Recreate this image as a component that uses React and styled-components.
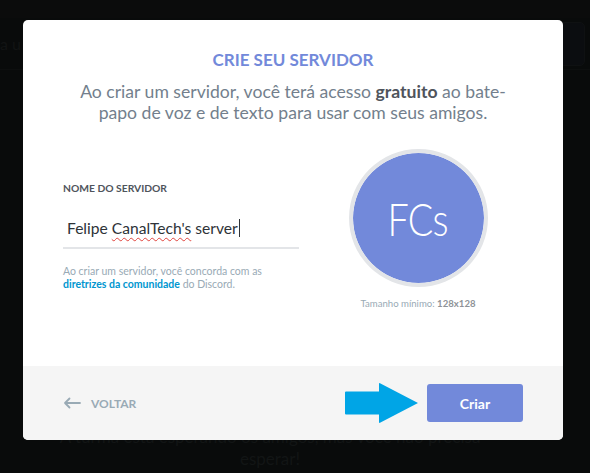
import React from "react";
import styled, { createGlobalStyle } from "styled-components";

const Global = createGlobalStyle`
  html, body { margin: 0; padding: 0; background: #0a0c0c; }
  body { font-family: Lato, "Noto Sans", sans-serif; }
  * { box-sizing: border-box; }
`;

const Page = styled.div`
  position: relative;
  width: 590px;
  height: 473px;
  overflow: hidden;
  background: #090b0b;
  display: flex;
  flex-direction: column;
`;

const TopBand = styled.div`
  height: 18px;
  background: #0b0c0c;
`;

const BgHeader = styled.div`
  height: 52px;
  display: flex;
  align-items: center;
  justify-content: space-between;
  padding: 0 5px 0 0;
  border-bottom: 1px solid #0d0f0f;
`;

const BgFaint = styled.span`
  color: #121414;
  font-size: 16px;
`;

const BgBox = styled.div`
  width: 26px;
  height: 44px;
  border: 1px solid #0f1112;
  border-radius: 5px;
  background: #0b0d10;
`;

const BgBody = styled.div`
  flex: 1;
  display: flex;
  flex-direction: column;
  justify-content: flex-end;
  padding-bottom: 3px;
`;

const BgText = styled.p`
  margin: 0;
  width: 540px;
  text-align: center;
  color: #121515;
  font-size: 17px;
  line-height: 22px;
`;

const Modal = styled.div`
  position: absolute;
  left: 23px;
  top: 20px;
  width: 540px;
  height: 420px;
  background: #ffffff;
  border-radius: 5px;
  overflow: hidden;
  display: flex;
  flex-direction: column;
`;

const Header = styled.div`
  padding: 30px 30px 0;
  text-align: center;
`;

const Title = styled.h2`
  margin: 0;
  color: #7289da;
  font-size: 17px;
  line-height: 20px;
  font-weight: 700;
`;

const Subtitle = styled.p`
  margin: 11px 0 0;
  color: #737f8d;
  font-size: 17.6px;
  line-height: 21px;
  font-weight: 400;
  b { color: #4f545c; font-weight: 700; }
`;

const Body = styled.div`
  display: flex;
  justify-content: space-between;
  align-items: flex-start;
  padding: 26px 75px 0 40px;
`;

const LeftCol = styled.div`
  width: 236px;
  padding-top: 32px;
`;

const Label = styled.div`
  color: #4f545c;
  font-size: 10.3px;
  line-height: 14px;
  font-weight: 700;
  text-transform: uppercase;
`;

const InputBox = styled.div`
  margin-top: 14px;
  height: 40px;
  border-bottom: 2px solid #e3e5e8;
  display: flex;
  align-items: center;
  padding-left: 4px;
  color: #2e3338;
  font-size: 15.6px;
`;

const Misspelled = styled.span`
  text-decoration: underline wavy #e0443e;
  text-decoration-thickness: 1px;
  text-underline-offset: 3px;
`;

const Caret = styled.span`
  display: inline-block;
  width: 1px;
  height: 18px;
  background: #2e3338;
  margin-left: 1px;
`;

const Help = styled.p`
  margin: 16px 0 0;
  color: #99aab5;
  font-size: 10.5px;
  line-height: 13px;
  a { color: #0096cf; font-weight: 700; text-decoration: none; }
`;

const RightCol = styled.div`
  width: 140px;
  display: flex;
  flex-direction: column;
  align-items: center;
`;

const Avatar = styled.div`
  width: 139px;
  height: 138px;
  border-radius: 50%;
  border: 4px solid #e3e5e8;
  background: #7289da;
  background-clip: padding-box;
  display: flex;
  align-items: center;
  justify-content: center;
  color: #ffffff;
  font-size: 46px;
  font-weight: 300;
  letter-spacing: -1px;
`;

const AvatarInner = styled.span`
  display: inline-block;
  transform: scaleX(0.82);
`;

const SizeHint = styled.div`
  margin-top: 10px;
  color: #99aab5;
  font-size: 9.6px;
  line-height: 13px;
  white-space: nowrap;
  b { color: #8e9297; font-weight: 700; }
`;

const Footer = styled.div`
  margin-top: auto;
  height: 74px;
  background: #f5f5f5;
  display: flex;
  align-items: center;
  justify-content: space-between;
  padding: 0 40px;
  position: relative;
`;

const BackButton = styled.button`
  border: 0;
  background: none;
  padding: 0;
  display: flex;
  align-items: center;
  gap: 10px;
  color: #99aab5;
  font-family: inherit;
  font-size: 12px;
  font-weight: 700;
  text-transform: uppercase;
`;

const CreateButton = styled.button`
  width: 96px;
  height: 38px;
  border: 0;
  border-radius: 3px;
  background: #7289da;
  color: #ffffff;
  font-family: inherit;
  font-size: 14px;
  font-weight: 700;
`;

const Pointer = styled.svg`
  position: absolute;
  left: 321px;
  top: 16px;
`;

export default function App() {
  return (
    <>
      <Global />
      <Page>
        <TopBand />
        <BgHeader>
          <BgFaint>a u</BgFaint>
          <BgBox />
        </BgHeader>
        <BgBody>
          <BgText>
            A turma está esperando os amigos, mas você não precisa
            <br />
            esperar!
          </BgText>
        </BgBody>
        <Modal>
          <Header>
            <Title>CRIE SEU SERVIDOR</Title>
            <Subtitle>
              Ao criar um servidor, você terá acesso <b>gratuito</b> ao bate-
              <br />
              papo de voz e de texto para usar com seus amigos.
            </Subtitle>
          </Header>
          <Body>
            <LeftCol>
              <Label>Nome do servidor</Label>
              <InputBox>
                Felipe&nbsp;<Misspelled>CanalTech's</Misspelled>&nbsp;server
                <Caret />
              </InputBox>
              <Help>
                Ao criar um servidor, você concorda com as
                <br />
                <a href="#">diretrizes da comunidade</a> do Discord.
              </Help>
            </LeftCol>
            <RightCol>
              <Avatar>
                <AvatarInner>FCs</AvatarInner>
              </Avatar>
              <SizeHint>
                Tamanho mínimo: <b>128x128</b>
              </SizeHint>
            </RightCol>
          </Body>
          <Footer>
            <BackButton>
              <svg width="18" height="12" viewBox="0 0 18 12" fill="none">
                <path d="M17 6H2M6.5 1.5L2 6l4.5 4.5" stroke="#99aab5" strokeWidth="1.8" strokeLinecap="round" strokeLinejoin="round" />
              </svg>
              Voltar
            </BackButton>
            <CreateButton>Criar</CreateButton>
            <Pointer width="76" height="43" viewBox="0 0 76 43">
              <path
                d="M2 9.5 H35 V2 Q35 0.5 36.5 1.5 L74 21 L36.5 40.5 Q35 41.5 35 40 V32.5 H2 Q1 32.5 1 31.5 V10.5 Q1 9.5 2 9.5 Z"
                fill="#00a5e6"
              />
            </Pointer>
          </Footer>
        </Modal>
      </Page>
    </>
  );
}
